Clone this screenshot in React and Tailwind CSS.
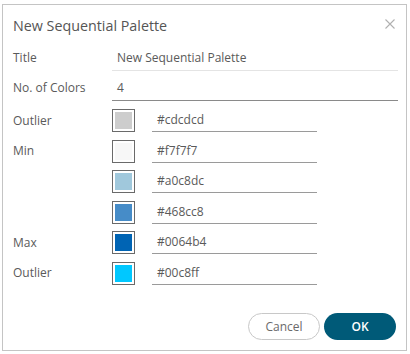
import React from "react";

const rows = [
  { label: "Outlier", color: "#cdcdcd" },
  { label: "Min", color: "#f7f7f7" },
  { label: "", color: "#a0c8dc" },
  { label: "", color: "#468cc8" },
  { label: "Max", color: "#0064b4" },
  { label: "Outlier", color: "#00c8ff" },
];

export default function App() {
  return (
    <div className="pl-[2px] pt-[4px] bg-white w-[410px] h-[354px]" style={{ fontFamily: '"Open Sans", sans-serif' }}>
      <div className="relative w-[405px] h-[347px] border border-[#c4c4c4] bg-white flex flex-col">
        <button className="absolute top-[13px] right-[10px] w-[12px] h-[12px] flex items-center justify-center">
          <svg width="10" height="10" viewBox="0 0 10 10" fill="none" stroke="#b0b0b0" strokeWidth="1.1">
            <path d="M0.5 0.5 L9.5 9.5 M9.5 0.5 L0.5 9.5" />
          </svg>
        </button>
        <div className="pl-[10px] pt-[11px] text-[14.3px] leading-[20px] text-[#555]">New Sequential Palette</div>

        <div className="flex pl-[10px] pr-[8px] mt-[9px] h-[26px]">
          <div className="w-[99px] text-[12px] text-[#5a5a5a] flex items-center">Title</div>
          <div className="flex-1 border-b border-[#e4e4e4] text-[12px] text-[#5a5a5a] pl-[5px] flex items-center">New Sequential Palette</div>
        </div>
        <div className="flex pl-[10px] pr-[8px] mt-[4px] h-[26px]">
          <div className="w-[99px] text-[12px] text-[#5a5a5a] flex items-center">No. of Colors</div>
          <div className="flex-1 border-b border-[#8a8a8a] text-[12px] text-[#5a5a5a] pl-[5px] flex items-center">4</div>
        </div>

        <div className="flex flex-col pl-[10px] mt-[8px]">
          {rows.map((r, i) => (
            <div key={i} className="flex h-[30.6px]">
              <div className="w-[99px] h-[23px] text-[12px] text-[#5a5a5a] flex items-center">{r.label}</div>
              <div className="w-[23px] h-[23px] border border-[#6a6a6a] bg-white p-[2px]">
                <div className="w-full h-full" style={{ background: r.color }} />
              </div>
              <div className="ml-[17px] w-[165px] h-[23px] border-b border-[#9a9a9a] text-[12px] text-[#5a5a5a] pl-[5px] flex items-center">
                {r.color}
              </div>
            </div>
          ))}
        </div>

        <div className="mt-auto mb-[10px] mr-[10px] flex justify-end gap-[4px]">
          <button className="w-[72px] h-[27px] rounded-full border border-[#c8c8c8] bg-white text-[12px] text-[#6a6a6a]">Cancel</button>
          <button className="w-[72px] h-[27px] rounded-full bg-[#005a78] text-[12px] font-semibold text-white">OK</button>
        </div>
      </div>
    </div>
  );
}
